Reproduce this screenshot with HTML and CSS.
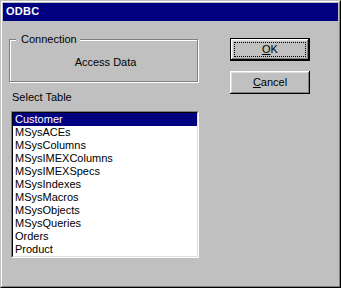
FILE: index.html
```html
<!DOCTYPE html>
<html lang="en">
<head>
  <meta charset="UTF-8">
  <title>ODBC</title>
  <link rel="stylesheet" href="styles.css">
</head>
<body>

  <div class="window">
    <div class="frame">
      <div class="titlebar">ODBC</div>

      <div class="content">
        <div class="left">
          <div class="group">
            <span class="group-label">Connection</span>
            <div class="group-text">Access Data</div>
          </div>

          <div class="list-label">Select Table</div>

          <div class="listbox">
            <ul class="list">
              <li class="selected">Customer</li>
              <li>MSysACEs</li>
              <li>MSysColumns</li>
              <li>MSysIMEXColumns</li>
              <li>MSysIMEXSpecs</li>
              <li>MSysIndexes</li>
              <li>MSysMacros</li>
              <li>MSysObjects</li>
              <li>MSysQueries</li>
              <li>Orders</li>
              <li>Product</li>
            </ul>
          </div>
        </div>

        <div class="buttons">
          <button class="btn default"><span class="focus"><u>O</u>K</span></button>
          <button class="btn"><u>C</u>ancel</button>
        </div>
      </div>
    </div>
  </div>

</body>
</html>
```

FILE: styles.css
```css
* {
  box-sizing: border-box;
  margin: 0;
  padding: 0;
}

body {
  font-family: "Liberation Sans", Arial, sans-serif;
  font-size: 11px;
  line-height: 13px;
  color: #000;
  background-color: #c0c0c0;
}

.window {
  width: 341px;
  height: 288px;
  border: 1px solid;
  border-color: #c0c0c0 #000 #000 #c0c0c0;
}

.frame {
  height: 100%;
  padding: 1px;
  border: 1px solid;
  border-color: #fff #808080 #808080 #fff;
  background-color: #c0c0c0;
}

.titlebar {
  height: 18px;
  padding: 2px 0 0 3px;
  background-color: #000080;
  color: #fff;
  font-weight: bold;
  letter-spacing: 0.3px;
}

.content {
  display: flex;
  padding-left: 6px;
}

.left {
  width: 190px;
}

/* etched group box */
.group {
  position: relative;
  width: 189px;
  height: 43px;
  margin-top: 18px;
  border: 1px solid #808080;
  box-shadow: 1px 1px 0 #fff, inset 1px 1px 0 #fff;
}

.group-label {
  position: absolute;
  top: -7px;
  left: 6px;
  padding: 0 3px 0 5px;
  background-color: #c0c0c0;
}

.group-text {
  padding-top: 16px;
  text-align: center;
  padding-left: 4px;
}

.list-label {
  margin-top: 9px;
  margin-left: 3px;
}

.listbox {
  width: 188px;
  height: 147px;
  margin: 7px 0 0 2px;
  border: 1px solid;
  border-color: #808080 #fff #fff #808080;
}

.list {
  height: 100%;
  list-style: none;
  background-color: #fff;
  border: 1px solid;
  border-color: #000 #dfdfdf #dfdfdf #000;
}

.list li {
  height: 13px;
  padding-left: 2px;
  white-space: nowrap;
}

.list li.selected {
  background-color: #000080;
  color: #fff;
}

.buttons {
  display: flex;
  flex-direction: column;
  gap: 10px;
  margin: 17px 0 0 31px;
}

.btn {
  width: 80px;
  height: 23px;
  display: flex;
  align-items: center;
  justify-content: center;
  font: inherit;
  color: #000;
  background-color: #c0c0c0;
  border: none;
  box-shadow: inset -1px -1px 0 #000, inset 1px 1px 0 #fff,
              inset -2px -2px 0 #808080, inset 2px 2px 0 #dfdfdf;
}

.btn.default {
  border: 1px solid #000;
  padding: 3px;
}

.focus {
  width: 100%;
  height: 100%;
  display: flex;
  align-items: center;
  justify-content: center;
  border: 1px dotted #000;
}

.btn u {
  text-underline-offset: 1px;
}
```
